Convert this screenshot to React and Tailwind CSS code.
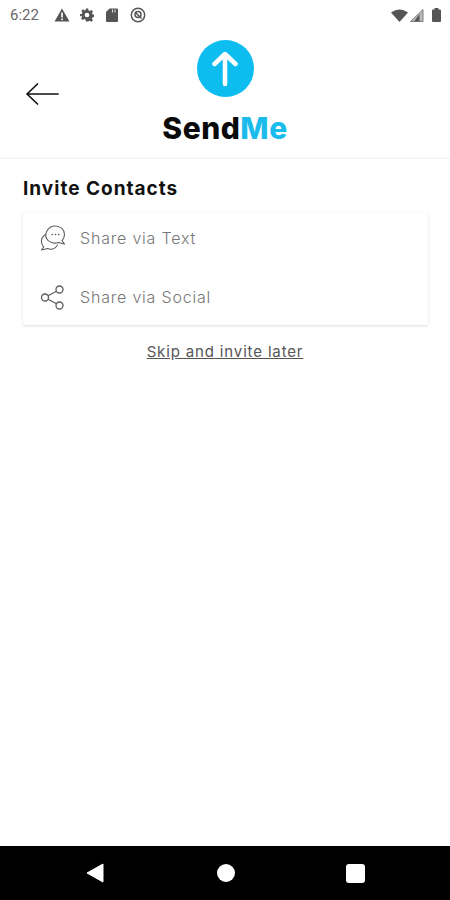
function StatusBar() {
  return (
    <div className="flex h-[28px] items-center justify-between pl-[10px] pr-[9px] pt-[2px]">
      <div className="flex items-center">
        <span className="w-[44px] text-[15px] text-[#6a6a6a] font-['Roboto',sans-serif]">6:22</span>
        <svg width="16" height="14" viewBox="0 0 16 14" className="mr-[10px]">
          <path d="M8 0.5 L15.5 13.5 H0.5 Z" fill="#555" />
          <rect x="7.2" y="4.5" width="1.6" height="5" fill="#fff" />
          <rect x="7.2" y="10.5" width="1.6" height="1.6" fill="#fff" />
        </svg>
        <svg width="14" height="14" viewBox="0 0 24 24" className="mr-[12px]">
          <path
            fill="#555"
            fillRule="evenodd"
            d="M10 1h4l.6 3.2 2 .9L19.4 3.300l2.800 2.800-1.800 2.800.9 2 3.200.6v4l-3.200.6-.9 2 1.800 2.800-2.800 2.800-2.800-1.800-2 .9L14 23h-4l-.6-3.200-2-.9-2.800 1.800-2.800-2.800 1.800-2.800-.9-2L0 14.500v-4l3.200-.6.9-2L2.300 5.100l2.800-2.800 2.800 1.800 2-.9zM12 8a4 4 0 1 0 0 8 4 4 0 0 0 0-8z"
          />
        </svg>
        <svg width="12" height="14" viewBox="0 0 12 14" className="mr-[12px]">
          <path d="M3.500 0.500 H11 a1 1 0 0 1 1 1 V13 a1 1 0 0 1 -1 1 H1 a1 1 0 0 1 -1 -1 V4 Z" fill="#555" />
          <rect x="6" y="1.500" width="1" height="3" fill="#ddd" />
          <rect x="8.500" y="1.500" width="1" height="3" fill="#ddd" />
        </svg>
        <svg width="16" height="16" viewBox="0 0 16 16">
          <circle cx="8" cy="8" r="6.700" fill="none" stroke="#555" strokeWidth="1.500" />
          <circle cx="8" cy="7.500" r="3" fill="none" stroke="#555" strokeWidth="1.500" />
          <path d="M5 5 L11.500 11.500" stroke="#555" strokeWidth="1.500" />
        </svg>
      </div>
      <div className="flex items-center">
        <svg width="17" height="13" viewBox="0 0 17 13" className="mr-[2px]">
          <path d="M0 3.500 Q8.500 -2.500 17 3.500 L8.500 13 Z" fill="#555" />
        </svg>
        <svg width="14" height="13" viewBox="0 0 14 13" className="mr-[8px]">
          <path d="M0.500 12.500 L13 0.500 V12.500 Z" fill="#bbb" />
          <path d="M4 12.500 L9.500 5 V12.500 Z" fill="#555" />
          <path d="M0.500 12.500 L13 0.500 V12.500 Z" fill="none" stroke="#666" strokeWidth="0.800" />
        </svg>
        <svg width="9" height="14" viewBox="0 0 9 14">
          <path d="M2.500 0 H6.500 V1.500 H8 a1 1 0 0 1 1 1 V13 a1 1 0 0 1 -1 1 H1 a1 1 0 0 1 -1 -1 V2.500 a1 1 0 0 1 1 -1 H2.500 Z" fill="#555" />
        </svg>
      </div>
    </div>
  );
}

function Header() {
  return (
    <div className="relative flex h-[131px] flex-col items-center border-b-2 border-[#f6f6f6] pt-[12px]">
      <svg width="34" height="24" viewBox="0 0 34 24" className="absolute left-[25px] top-[54px]">
        <path d="M33 12 H2 M12.500 2 L2 12 L12.500 22" fill="none" stroke="#111" strokeWidth="1.700" strokeLinecap="round" strokeLinejoin="round" />
      </svg>
      <div className="flex h-[57px] w-[57px] items-center justify-center rounded-full bg-[#0dbdf0]">
        <svg width="26" height="36" viewBox="0 0 26 36">
          <path d="M13 33 V3 M2.500 13 L13 3 L23.500 13" fill="none" stroke="#fff" strokeWidth="4.500" strokeLinecap="round" strokeLinejoin="round" />
        </svg>
      </div>
      <div className="mt-[13px] text-[30px] leading-[36px] font-extrabold tracking-[0.5px] text-[#0a0a0a] font-['Inter',sans-serif]">
        Send<span className="text-[#1bbcec]">Me</span>
      </div>
    </div>
  );
}

function ChatIcon() {
  return (
    <svg width="26" height="26" viewBox="0 0 26 26" fill="none" stroke="#5c5c5c" strokeWidth="1.100" strokeLinecap="round" strokeLinejoin="round">
      <path d="M15 1 C20.500 1 24.500 4.500 24.500 9.500 C24.500 12 23.500 14 22 15.500 L24.500 19 L18.500 17.500 C14 19 8.500 17.500 6.500 13.500 C4 8 8.500 1 15 1 Z" />
      <path d="M5.500 9.500 C2.500 11.500 1 14.500 1.500 17.500 C1.800 19.500 2.800 20.800 3.800 21.800 L1.500 25 L7.500 23.500 C11.500 25 15.500 23.500 17.500 20" />
      <path d="M12 9.500 H12.400 M15.300 9.500 H15.700 M18.600 9.500 H19" strokeWidth="1.300" />
    </svg>
  );
}

function ShareIcon() {
  return (
    <svg width="26" height="26" viewBox="0 0 26 26" fill="none" stroke="#5c5c5c" strokeWidth="1.300">
      <circle cx="19.500" cy="5.500" r="3.500" />
      <circle cx="5" cy="13.500" r="3.500" />
      <circle cx="19.500" cy="21.500" r="3.500" />
      <path d="M16.500 7.200 L8 11.700 M8 15.300 L16.500 19.800" />
    </svg>
  );
}

function Row({ icon, label }) {
  return (
    <div className="flex h-[59px] shrink-0 items-center">
      <div className="flex w-[57px] justify-center pl-[3px]">{icon}</div>
      <span className="text-[16px] tracking-[0.8px] text-[#777] font-['Inter',sans-serif] font-light">{label}</span>
    </div>
  );
}

export default function App() {
  return (
    <div className="flex h-[900px] w-[450px] flex-col bg-white font-['Inter',sans-serif]">
      <StatusBar />
      <Header />
      <div className="flex-1 px-[23px]">
        <h1 className="mt-[18px] text-[19px] leading-[24px] font-bold tracking-[1px] text-[#111]">Invite Contacts</h1>
        <div className="mt-[12px] flex h-[112px] w-[405px] flex-col justify-center rounded-[2px] bg-white pb-[3px] shadow-[0_1px_3px_rgba(0,0,0,0.14)]">
          <Row icon={<ChatIcon />} label="Share via Text" />
          <Row icon={<ShareIcon />} label="Share via Social" />
        </div>
        <div className="mt-[17px] text-center text-[15px] leading-[20px] tracking-[0.85px] text-[#555] underline">
          Skip and invite later
        </div>
      </div>
      <div className="flex h-[54px] items-center bg-black">
        <svg width="18" height="20" viewBox="0 0 18 20" className="ml-[86px]">
          <path d="M17 1 V19 L1 10 Z" fill="#fff" stroke="#fff" strokeLinejoin="round" />
        </svg>
        <div className="ml-[113px] h-[18px] w-[18px] rounded-full bg-white" />
        <div className="ml-[111px] h-[19px] w-[19px] rounded-[3px] bg-white" />
      </div>
    </div>
  );
}
